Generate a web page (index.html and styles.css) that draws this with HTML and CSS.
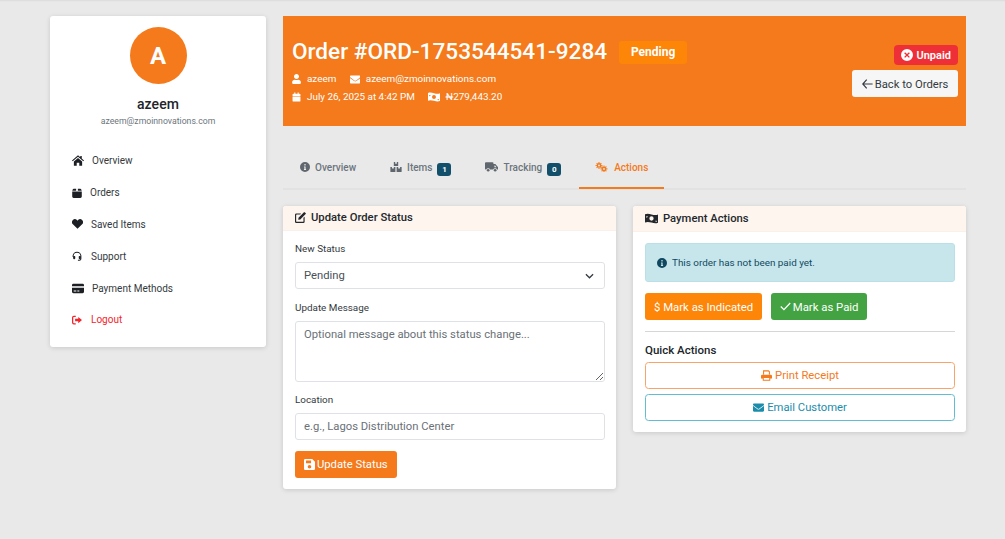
FILE: index.html
```html
<!DOCTYPE html>
<html lang="en">
<head>
<meta charset="utf-8">
<title>Order #ORD-1753544541-9284</title>
<link rel="stylesheet" href="styles.css">
</head>
<body>
<svg class="defs" width="0" height="0" aria-hidden="true">
  <symbol id="i-user" viewBox="0 0 448 512"><path d="M224 256c70.7 0 128-57.3 128-128S294.700 0 224 0 96 57.300 96 128s57.300 128 128 128zm89.600 32h-16.700c-22.200 10.200-46.900 16-72.900 16s-50.600-5.800-72.900-16h-16.700C60.200 288 0 348.200 0 422.400V464c0 26.500 21.500 48 48 48h352c26.500 0 48-21.500 48-48v-41.600c0-74.200-60.200-134.400-134.400-134.400z"/></symbol>
  <symbol id="i-mail" viewBox="0 0 512 512"><path d="M502.300 190.800c3.900-3.100 9.700-.2 9.700 4.700V400c0 26.500-21.500 48-48 48H48c-26.500 0-48-21.500-48-48V195.600c0-5 5.700-7.800 9.700-4.700 22.400 17.400 52.100 39.500 154.100 113.600 21.100 15.400 56.700 47.800 92.200 47.600 35.700.3 72-32.800 92.300-47.600 102-74.100 131.600-96.300 154-113.700zM256 320c23.200.4 56.600-29.200 73.400-41.400 132.700-96.300 142.800-104.700 173.400-128.700 5.800-4.500 9.200-11.500 9.200-18.900v-19c0-26.500-21.500-48-48-48H48C21.500 64 0 85.500 0 112v19c0 7.400 3.400 14.300 9.200 18.900 30.600 23.900 40.700 32.400 173.400 128.700 16.800 12.200 50.200 41.800 73.400 41.400z"/></symbol>
  <symbol id="i-cal" viewBox="0 0 16 16"><path d="M4 0h2v2h4V0h2v2h1.500A1.500 1.500 0 0 1 15 3.500V6H1V3.500A1.500 1.500 0 0 1 2.500 2H4zM1 7h14v7.500a1.500 1.500 0 0 1-1.500 1.500h-11A1.500 1.500 0 0 1 1 14.500z"/></symbol>
  <symbol id="i-money" viewBox="0 0 20 16"><path fill-rule="evenodd" d="M0 1.500c3-1.300 6-.9 10 .2s7 1.500 10 .1v12.700c-3 1.300-6 .9-10-.2s-7-1.500-10-.1zM10 4.700a3.300 3.300 0 1 0 0 6.600 3.300 3.300 0 0 0 0-6.600zM2 4.500v2.300a2.300 2.300 0 0 0 2.300-2.300zm13.800 7a2.300 2.300 0 0 0 2.200 2v-2z"/></symbol>
  <symbol id="i-home" viewBox="0 0 16 14"><path d="M8 0l3 2.600V1h2v3.300L16 7l-.9 1L8 1.900.9 8 0 7zM2.500 8.200 8 3.500l5.500 4.700V14H9.700v-4H6.300v4H2.500z"/></symbol>
  <symbol id="i-box" viewBox="0 0 14 14"><path d="M2.500 1h3.300v3H.4L1 2.200A1.700 1.700 0 0 1 2.500 1zM8.200 1h3.300A1.700 1.700 0 0 1 13 2.200l.6 1.800H8.200zM.3 5h13.400v7a2 2 0 0 1-2 2H2.300a2 2 0 0 1-2-2z"/></symbol>
  <symbol id="i-heart" viewBox="0 0 16 14"><path d="M8 14 1.300 7.300A4.200 4.200 0 0 1 7.200 1.300L8 2.100l.8-.8a4.200 4.200 0 0 1 5.900 6z"/></symbol>
  <symbol id="i-head" viewBox="0 0 16 16"><path d="M8 1a7 7 0 0 0-7 7v1.500h1.600V8a5.400 5.400 0 0 1 10.800 0v4.200c0 .9-.7 1.600-1.600 1.600H9.500v1.600h2.300c1.800 0 3.200-1.400 3.200-3.200V8a7 7 0 0 0-7-7z"/><rect x="1.800" y="8" width="3.400" height="5" rx="1.300"/><rect x="10.800" y="8" width="3.400" height="5" rx="1.300"/></symbol>
  <symbol id="i-card" viewBox="0 0 18 14"><path d="M2 0h14a2 2 0 0 1 2 2v1.500H0V2a2 2 0 0 1 2-2zM0 6h18v6a2 2 0 0 1-2 2H2a2 2 0 0 1-2-2zm2.500 4v1.500h4V10zm5.500 0v1.500h3V10z"/></symbol>
  <symbol id="i-out" viewBox="0 0 16 14"><path d="M6 0v2H3a1 1 0 0 0-1 1v8a1 1 0 0 0 1 1h3v2H3a3 3 0 0 1-3-3V3a3 3 0 0 1 3-3zM10 2l6 5-6 5V9H5V5h5z"/></symbol>
  <symbol id="i-info" viewBox="0 0 16 16"><path fill-rule="evenodd" d="M8 0a8 8 0 1 1 0 16A8 8 0 0 1 8 0zM7 3.200v2.300h2V3.200zM6.300 7v1.500H7v2.700h-.7v1.500h3.400v-1.500H9V7z"/></symbol>
  <symbol id="i-items" viewBox="0 0 18 16"><path d="M5.500 0h2.200v3l1.300-.8L10.300 3V0h2.200v6.500h-7zM0 8h2.500v2.500h3V8H8v8H1a1 1 0 0 1-1-1zM10 8h2.500v2.500h3V8H18v7a1 1 0 0 1-1 1h-7z"/></symbol>
  <symbol id="i-truck" viewBox="0 0 20 15"><path fill-rule="evenodd" d="M1.500 0h10A1.500 1.500 0 0 1 13 1.500V3h2.500c.4 0 .8.200 1 .5L19.500 7c.3.300.5.700.5 1v3.500h-1.500a3 3 0 0 0-5.800 0H7.800a3 3 0 0 0-5.800 0h-.5A1.500 1.500 0 0 1 0 10V1.500A1.500 1.500 0 0 1 1.500 0zM14.500 5v2.800h3.300L15.500 5z"/><circle cx="4.900" cy="12.500" r="2.100"/><circle cx="15.600" cy="12.500" r="2.100"/></symbol>
  <symbol id="i-cogs" viewBox="0 0 20 16"><g fill="none" stroke="currentColor"><circle cx="6" cy="5.500" r="2.700" stroke-width="2.300"/><circle cx="14" cy="11" r="2.700" stroke-width="2.300"/><path stroke-width="1.700" d="M6 0v2M6 9v2M.5 5.500h2M9.500 5.500h2M2.200 1.700l1.300 1.300M8.500 8l1.300 1.300M2.200 9.300 3.500 8M8.500 3l1.300-1.300M14 5.500v2M14 14.500v1.500M8.500 11h2M17.500 11h2M10.200 7.200l1.300 1.300M16.500 13.500l1.300 1.300M10.200 14.800l1.300-1.300M16.500 8.500l1.300-1.300"/></g></symbol>
  <symbol id="i-edit" viewBox="0 0 16 16"><path d="M2 2h7L7.500 3.700H2.600a.9.900 0 0 0-.9.900v8.800c0 .5.400.9.900.9h8.800c.5 0 .9-.4.900-.9V8.500L14 6.800V14a2 2 0 0 1-2 2H2a2 2 0 0 1-2-2V4a2 2 0 0 1 2-2z"/><path d="M13 .5 15.500 3l-7.800 7.800-3 .4.400-3zM13.800 0l2.200 2.200-.6.600-2.200-2.200z"/></symbol>
  <symbol id="i-save" viewBox="0 0 14 14"><path fill-rule="evenodd" d="M1.500 0H10.500L14 3.500V12.500A1.500 1.500 0 0 1 12.500 14h-11A1.500 1.500 0 0 1 0 12.500v-11A1.500 1.500 0 0 1 1.500 0zM2.500 2v3.500H9V2zM7 7.500A2.300 2.300 0 1 0 7 12.100 2.300 2.300 0 0 0 7 7.500z"/></symbol>
  <symbol id="i-print" viewBox="0 0 16 15"><path fill-rule="evenodd" d="M3 0h8.200L13 1.800V6h-1.500V2.500L10.500 1.500h-6V6H3zM1.800 6.500h12.400A1.800 1.800 0 0 1 16 8.300V12h-2.500v3h-11v-3H0V8.300A1.800 1.800 0 0 1 1.800 6.500zM4 11v2.600h8V11z"/></symbol>
  <symbol id="i-x" viewBox="0 0 16 16"><path fill-rule="evenodd" d="M8 0a8 8 0 1 1 0 16A8 8 0 0 1 8 0zM5.500 4.200 4.200 5.500 6.700 8l-2.500 2.500 1.300 1.300L8 9.300l2.500 2.500 1.300-1.300L9.300 8l2.500-2.500-1.300-1.300L8 6.700z"/></symbol>
  <symbol id="i-arrow" viewBox="0 0 14 12"><path d="M6 .5 1 6l5 5.500M1 6h12.500" fill="none" stroke="currentColor" stroke-width="1.500"/></symbol>
  <symbol id="i-check" viewBox="0 0 14 11"><path d="M1 5.500 5 9.500 13 1" fill="none" stroke="currentColor" stroke-width="1.600"/></symbol>
</svg>

<div class="page">
  <aside class="sidebar">
    <div class="avatar">A</div>
    <h2 class="user-name">azeem</h2>
    <p class="user-mail">azeem@zmoinnovations.com</p>
    <nav class="nav">
      <a class="nav-item"><svg class="ico-home"><use href="#i-home"/></svg><span class="gap-3">Overview</span></a>
      <a class="nav-item"><svg class="ico-box"><use href="#i-box"/></svg><span class="gap-1">Orders</span></a>
      <a class="nav-item"><svg class="ico-heart"><use href="#i-heart"/></svg><span class="gap-1">Saved Items</span></a>
      <a class="nav-item"><svg class="ico-box"><use href="#i-head"/></svg><span class="gap-2">Support</span></a>
      <a class="nav-item"><svg class="ico-home"><use href="#i-card"/></svg><span class="gap-3">Payment Methods</span></a>
      <a class="nav-item logout"><svg class="ico-box"><use href="#i-out"/></svg><span class="gap-2">Logout</span></a>
    </nav>
  </aside>

  <main class="main">
    <header class="hero">
      <div class="hero-left">
        <div class="hero-title">
          <h1>Order #ORD-1753544541-9284</h1>
          <span class="pill-pending">Pending</span>
        </div>
        <div class="meta">
          <span class="meta-item"><svg class="m-ico"><use href="#i-user"/></svg>azeem</span>
          <span class="meta-item"><svg class="m-ico mail"><use href="#i-mail"/></svg>azeem@zmoinnovations.com</span>
        </div>
        <div class="meta">
          <span class="meta-item"><svg class="m-ico"><use href="#i-cal"/></svg>July 26, 2025 at 4:42 PM</span>
          <span class="meta-item"><svg class="m-ico wide"><use href="#i-money"/></svg>₦279,443.20</span>
        </div>
      </div>
      <div class="hero-right">
        <span class="pill-unpaid"><svg class="x-ico"><use href="#i-x"/></svg>Unpaid</span>
        <a class="btn-back"><svg class="arrow"><use href="#i-arrow"/></svg>Back to Orders</a>
      </div>
    </header>

    <div class="tabs">
      <a class="tab"><svg class="t-ico"><use href="#i-info"/></svg>Overview</a>
      <a class="tab"><svg class="t-ico wide"><use href="#i-items"/></svg>Items<span class="count">1</span></a>
      <a class="tab"><svg class="t-ico wide2"><use href="#i-truck"/></svg>Tracking<span class="count">0</span></a>
      <a class="tab active"><svg class="t-ico wide2"><use href="#i-cogs"/></svg>Actions</a>
    </div>

    <div class="cols">
      <section class="card">
        <div class="card-head"><svg class="h-ico"><use href="#i-edit"/></svg>Update Order Status</div>
        <form class="card-body">
          <label class="lbl" for="st">New Status</label>
          <div class="select-wrap">
            <select id="st" class="field"><option>Pending</option></select>
            <svg class="chev" viewBox="0 0 10 6"><path d="M1 1l4 4 4-4" fill="none" stroke="#343a40" stroke-width="1.400"/></svg>
          </div>
          <label class="lbl" for="msg">Update Message</label>
          <textarea id="msg" class="field area" placeholder="Optional message about this status change..."></textarea>
          <label class="lbl" for="loc">Location</label>
          <input id="loc" class="field" placeholder="e.g., Lagos Distribution Center">
          <button type="button" class="btn orange"><svg class="b-ico"><use href="#i-save"/></svg>Update Status</button>
        </form>
      </section>

      <section class="card card-pay">
        <div class="card-head"><svg class="h-ico money"><use href="#i-money"/></svg>Payment Actions</div>
        <div class="card-body">
          <div class="alert"><svg class="al-ico"><use href="#i-info"/></svg>This order has not been paid yet.</div>
          <div class="btn-row">
            <button type="button" class="btn amber">$ Mark as Indicated</button>
            <button type="button" class="btn green"><svg class="ck"><use href="#i-check"/></svg>Mark as Paid</button>
          </div>
          <hr class="rule">
          <h3 class="quick">Quick Actions</h3>
          <button type="button" class="btn-line line-orange"><svg class="b-ico"><use href="#i-print"/></svg>Print Receipt</button>
          <button type="button" class="btn-line line-teal"><svg class="b-ico"><use href="#i-mail"/></svg>Email Customer</button>
        </div>
      </section>
    </div>
  </main>
</div>
</body>
</html>
```

FILE: styles.css
```css
* { box-sizing: border-box; }
html, body { margin: 0; height: 100%; }
body {
  background: #e9e9e9;
  font-family: Roboto, "Liberation Sans", sans-serif;
  color: #212529;
  box-shadow: inset 0 2px 2px -1px rgba(0,0,0,.06);
  overflow: hidden;
}
svg { fill: currentColor; flex: none; }
.defs { position: absolute; }
.page { display: flex; gap: 17px; padding: 16px 39px 0 50px; align-items: flex-start; }

.sidebar {
  width: 216px; height: 331px; background: #fff; border-radius: 3px;
  box-shadow: 0 1px 5px rgba(0,0,0,.14);
  padding-top: 11px; display: flex; flex-direction: column; align-items: center;
}
.avatar {
  width: 57px; height: 57px; border-radius: 50%; background: #f47a1b; color: #fff;
  font-size: 24px; font-weight: 700; display: flex; align-items: center; justify-content: center;
}
.user-name { margin: 11px 0 0; font-size: 14px; line-height: 18px; font-weight: 500; letter-spacing: .1px; }
.user-mail { margin: 2px 0 0; font-size: 8.700px; line-height: 13px; color: #6c757d; }
.nav { width: 100%; margin-top: 17px; padding-left: 22px; display: flex; flex-direction: column; }
.nav-item { height: 31.800px; display: flex; align-items: center; font-size: 10px; color: #343a40; }
.ico-home { width: 12px; height: 11px; color: #1c1f23; }
.ico-box { width: 10px; height: 10px; color: #1c1f23; }
.ico-heart { width: 11px; height: 10px; color: #1c1f23; }
.gap-1 { margin-left: 8px; }
.gap-2 { margin-left: 9px; }
.gap-3 { margin-left: 8px; }
.logout, .logout svg { color: #f5232b; }

.main { width: 683px; }
.hero {
  height: 110px; background: #f47a1b; color: #fff; display: flex;
  justify-content: space-between; padding: 24px 8px 0 9px;
}
.hero-title { display: flex; align-items: center; gap: 12px; }
.hero-title h1 { margin: 0; font-size: 22.600px; line-height: 24px; font-weight: 500; }
.pill-pending {
  background: #fd8508; height: 23px; width: 68px; justify-content: center; border-radius: 3px; font-size: 12px; font-weight: 700;
  display: flex; align-items: center;
}
.meta { display: flex; gap: 13.500px; font-size: 9.900px; line-height: 18px; }
.hero-title + .meta { margin-top: 6px; }
.meta-item { display: flex; align-items: center; }
.m-ico { width: 9px; height: 10px; margin-right: 6px; }
.m-ico.mail { width: 10.500px; height: 11px; margin-right: 5.500px; }
.m-ico.wide { width: 12px; margin-right: 5px; }
.hero-right { display: flex; flex-direction: column; align-items: flex-end; padding-top: 5px; }
.pill-unpaid {
  height: 20px; padding: 0 7px; background: #ef2f37; border-radius: 4px; font-size: 11px; font-weight: 600;
  display: flex; align-items: center;
}
.x-ico { width: 12px; height: 12px; margin-right: 3px; }
.btn-back {
  margin-top: 5px; height: 27px; width: 106px; background: #f6f6f7; border-radius: 3px; color: #343a40;
  font-size: 11.250px; display: flex; align-items: center; justify-content: center; padding-top: 1px;
}
.arrow { width: 11px; height: 10px; margin-right: 2px; }

.tabs { display: flex; gap: 2px; margin-top: 24px; height: 40px; border-bottom: 2px solid #e2e2e2; padding-left: 1px; }
.tab {
  height: 39px; display: flex; align-items: center; padding: 0 16px 5px; font-size: 10px; font-weight: 500; color: #6c757d;
}
.t-ico { width: 10px; height: 10px; margin-right: 5px; color: #5f666d; }
.t-ico.wide { width: 12px; }
.t-ico.wide2 { width: 13px; height: 10px; margin-right: 5px; }
.count {
  margin-left: 5px; margin-top: 4px; min-width: 14px; height: 13px; background: #124f6b; color: #fff; border-radius: 3px;
  font-size: 8px; font-weight: 700; display: flex; align-items: center; justify-content: center;
}
.tab.active { color: #f47a1b; border-bottom: 2px solid #f47a1b; padding-bottom: 3px; }
.tab.active .t-ico { color: #f47a1b; margin-right: 6px; }

.cols { display: flex; gap: 17px; margin-top: 16px; align-items: flex-start; }
.card { flex: 1 1 0; background: #fff; border-radius: 3px; box-shadow: 0 1px 5px rgba(0,0,0,.14); overflow: hidden; }
.card-head {
  height: 25px; background: #fdf5ee; display: flex; align-items: center; padding-left: 12px; padding-bottom: 2px;
  font-size: 11.250px; font-weight: 500; color: #24282c; border-bottom: 1px solid #faf0e8;
}
.h-ico { width: 11px; height: 11px; margin-right: 5px; }
.h-ico.money { width: 13px; margin-right: 5px; }
.card-pay .card-head { height: 26px; padding-bottom: 1px; }
.card-body { padding: 11px 11px 11px 12px; display: flex; flex-direction: column; align-items: flex-start; }
.lbl { font-size: 9.900px; line-height: 13px; color: #343a40; margin-bottom: 7px; display: block; }
.field {
  width: 310px; height: 27px; border: 1px solid #dee2e6; border-radius: 3px; background: #fff;
  font: 11.250px Roboto, sans-serif; color: #495057; padding: 0 8px; display: block; outline: none; appearance: none;
}
.field::placeholder { color: #6a7178; opacity: 1; }
.select-wrap { position: relative; margin-bottom: 12px; }
.chev { position: absolute; right: 11px; top: 11px; width: 9px; height: 6px; }
.area { height: 61px; padding-top: 6px; margin-bottom: 11px; resize: vertical; }
#loc { margin-bottom: 11px; margin-top: 0; }
.btn {
  height: 27px; border: 0; border-radius: 3px; color: #fff; font: 11.350px Roboto, sans-serif; padding: 0 9px;
  display: inline-flex; align-items: center; justify-content: center;
}
.orange { background: #f47a1b; font-size: 11.250px; }
.orange .b-ico { margin-right: 2px; }
.amber { background: #fd8508; }
.green { background: #43a342; padding: 0 8.500px; }
.b-ico { width: 11px; height: 11px; margin-right: 3px; }
.ck { width: 11px; height: 9px; margin-right: 2px; }
.alert {
  width: 310px; height: 39px; background: #c6e6ec; border: 1px solid #b9e0e8; border-radius: 3px; color: #10495f;
  font-size: 9.900px; display: flex; align-items: center; padding-left: 11px;
}
.al-ico { width: 10px; height: 10px; margin-right: 5px; }
.btn-row { display: flex; gap: 9px; margin-top: 11px; }
.rule { width: 310px; margin: 11px 0 0; border: 0; border-top: 1px solid #d4d6d8; }
.quick { margin: 11px 0 5px; font-size: 11.500px; line-height: 14px; font-weight: 500; }
.btn-line {
  width: 310px; height: 27px; background: #fff; border-radius: 3.500px; font: 11.250px Roboto, sans-serif;
  display: flex; align-items: center; justify-content: center; margin-bottom: 5px; border: 1px solid;
}
.btn-line:last-child { margin-bottom: 0; }
.line-orange { color: #f47a1b; border-color: #f8a468; }
.line-teal { color: #1c8cab; border-color: #63bdd1; }
```
